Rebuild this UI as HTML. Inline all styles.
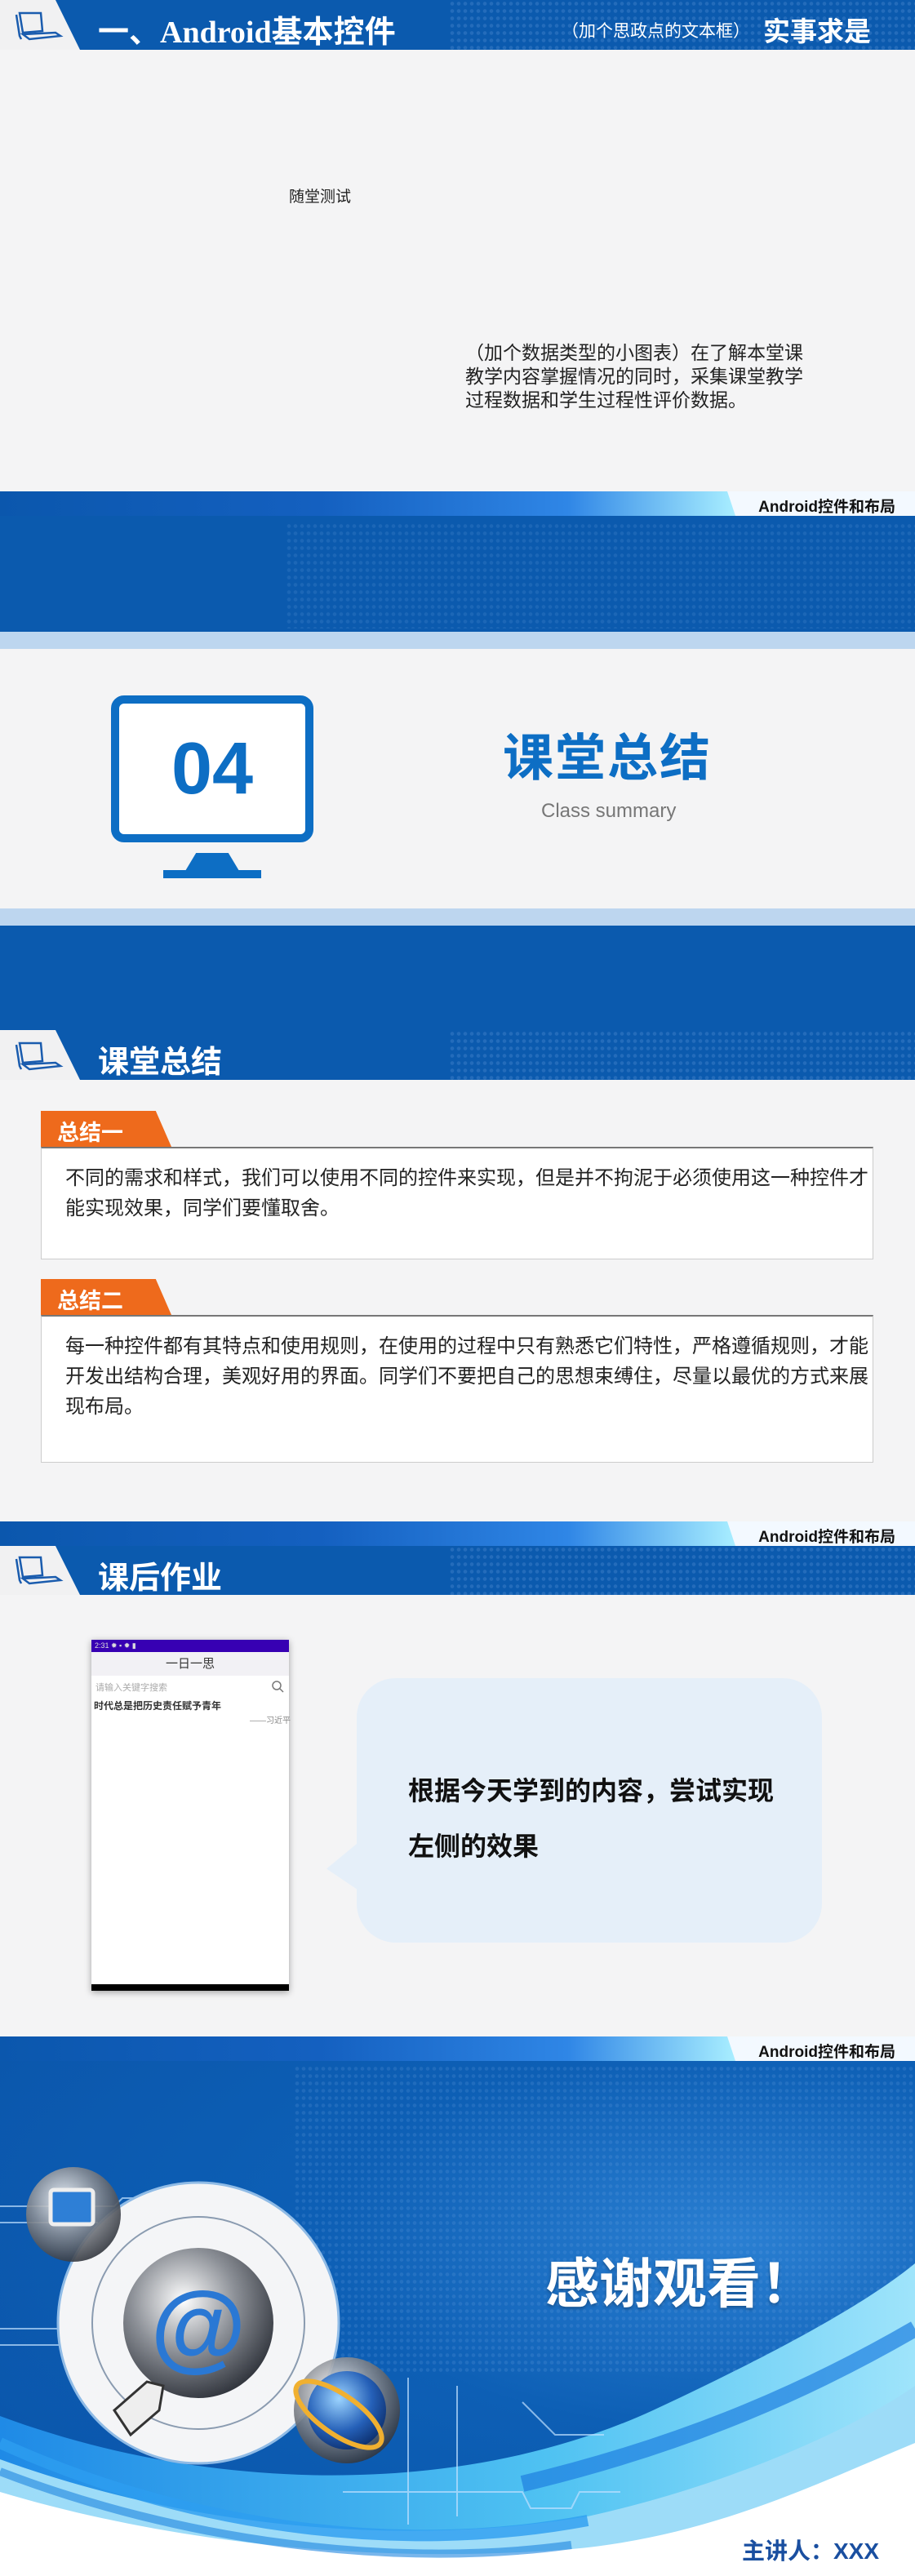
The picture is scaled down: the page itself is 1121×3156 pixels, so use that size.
<!DOCTYPE html>
<html><head><meta charset="utf-8">
<style>
*{margin:0;padding:0;box-sizing:border-box}
body{width:1121px;height:3156px;position:relative;background:#f4f4f5;overflow:hidden;font-family:"Liberation Sans","Noto Sans CJK SC",sans-serif}
.a{position:absolute}
.blue{background:#0b5aae}
.stripe{position:absolute;left:0;width:1121px;height:30px;background:linear-gradient(90deg,#0b57ad 0%,#1460c0 35%,#2f86e6 62%,#a6ecff 80%,#e9f7ff 84%)}
.stripe .lt{position:absolute;right:0;top:0;height:30px;width:250px;background:#f3f9ff;clip-path:polygon(8% 0,100% 0,100% 100%,12% 100%)}
.stripe span{position:absolute;right:24px;top:4px;font-size:19px;font-weight:bold;color:#111}
.tab{position:absolute;left:0;width:100px;height:61px;background:#f1f1f2;clip-path:polygon(0 0,68% 0,98% 100%,0 100%)}
.dots{background-image:radial-gradient(circle,rgba(120,170,230,.45) 2px,transparent 2.6px);background-size:8px 9px}
.h1w{color:#fff;font-weight:bold}
</style></head><body>

<!-- Slide 1 -->
<div class="a blue" style="left:0;top:0;width:1121px;height:61px"></div>
<div class="a dots" style="left:550px;top:0;width:571px;height:61px;opacity:.5"></div>
<div class="tab" style="top:0"></div>
<svg class="a" style="left:16px;top:12px" width="62" height="42" viewBox="0 0 62 42"><g fill="none" stroke="#1a5cae" stroke-width="2.5"><path d="M8 4 L34 4 L36 26 L12 28 Z"/><path d="M4 6 L8 32 L10 36"/><path d="M12 30 L52 28 L58 32 L20 36 Z"/></g></svg>
<div class="a h1w" style="left:120px;top:8px;font-size:38px;font-family:'Liberation Serif','Noto Sans CJK SC',serif">一、Android基本控件</div>
<div class="a" style="left:688px;top:22px;font-size:21px;color:#fff">（加个思政点的文本框）</div>
<div class="a h1w" style="left:935px;top:12px;font-size:33px">实事求是</div>
<div class="a" style="left:354px;top:226px;font-size:19px;color:#222">随堂测试</div>
<div class="a" style="left:570px;top:418px;width:425px;font-size:23px;line-height:29px;color:#222">（加个数据类型的小图表）在了解本堂课教学内容掌握情况的同时，采集课堂教学过程数据和学生过程性评价数据。</div>
<div class="stripe" style="top:602px"><div class="lt"></div><span>Android控件和布局</span></div>
<div class="a blue" style="left:0;top:632px;width:1121px;height:142px"></div>
<div class="a dots" style="left:350px;top:640px;width:771px;height:130px;opacity:.35"></div>
<div class="a" style="left:0;top:774px;width:1121px;height:21px;background:#bdd6ef"></div>

<!-- Slide 2 -->
<div class="a" style="left:136px;top:852px;width:248px;height:180px;border:10px solid #0d6ec4;border-radius:16px;background:#fff"></div>
<div class="a" style="left:136px;top:852px;width:248px;height:180px;text-align:center;line-height:180px;font-size:90px;font-weight:bold;color:#0d6ec4">04</div>
<div class="a" style="left:227px;top:1045px;width:66px;height:22px;background:#0d6ec4;clip-path:polygon(20% 0,80% 0,100% 100%,0 100%)"></div>
<div class="a" style="left:200px;top:1066px;width:120px;height:10px;background:#0d6ec4"></div>
<div class="a" style="left:616px;top:878px;font-size:62px;font-weight:bold;color:#0d6ec4;letter-spacing:2px">课堂总结</div>
<div class="a" style="left:663px;top:980px;font-size:24px;color:#777">Class summary</div>
<div class="a" style="left:0;top:1113px;width:1121px;height:21px;background:#bdd6ef"></div>

<!-- Slide 3 -->
<div class="a blue" style="left:0;top:1134px;width:1121px;height:189px"></div>
<div class="a dots" style="left:550px;top:1262px;width:571px;height:61px;opacity:.5"></div>
<div class="tab" style="top:1262px"></div>
<svg class="a" style="left:16px;top:1274px" width="62" height="42" viewBox="0 0 62 42"><g fill="none" stroke="#1a5cae" stroke-width="2.5"><path d="M8 4 L34 4 L36 26 L12 28 Z"/><path d="M4 6 L8 32 L10 36"/><path d="M12 30 L52 28 L58 32 L20 36 Z"/></g></svg>
<div class="a h1w" style="left:120px;top:1270px;font-size:38px">课堂总结</div>

<div class="a" style="left:50px;top:1361px;width:160px;height:44px;background:#ee6a1c;clip-path:polygon(0 0,88% 0,100% 100%,0 100%)"></div>
<div class="a h1w" style="left:70px;top:1366px;font-size:27px">总结一</div>
<div class="a" style="left:50px;top:1405px;width:1020px;height:138px;background:#fff;border:1px solid #ccc;border-top:2px solid #777"></div>
<div class="a" style="left:80px;top:1425px;width:985px;font-size:24px;line-height:37px;color:#222">不同的需求和样式，我们可以使用不同的控件来实现，但是并不拘泥于必须使用这一种控件才能实现效果，同学们要懂取舍。</div>

<div class="a" style="left:50px;top:1567px;width:160px;height:44px;background:#ee6a1c;clip-path:polygon(0 0,88% 0,100% 100%,0 100%)"></div>
<div class="a h1w" style="left:70px;top:1572px;font-size:27px">总结二</div>
<div class="a" style="left:50px;top:1611px;width:1020px;height:181px;background:#fff;border:1px solid #ccc;border-top:2px solid #777"></div>
<div class="a" style="left:80px;top:1631px;width:985px;font-size:24px;line-height:37px;color:#222">每一种控件都有其特点和使用规则，在使用的过程中只有熟悉它们特性，严格遵循规则，才能开发出结构合理，美观好用的界面。同学们不要把自己的思想束缚住，尽量以最优的方式来展现布局。</div>

<!-- Slide 4 -->
<div class="stripe" style="top:1864px"><div class="lt"></div><span>Android控件和布局</span></div>
<div class="a blue" style="left:0;top:1894px;width:1121px;height:60px"></div>
<div class="a dots" style="left:550px;top:1894px;width:571px;height:60px;opacity:.5"></div>
<div class="tab" style="top:1894px;height:60px"></div>
<svg class="a" style="left:16px;top:1904px" width="62" height="42" viewBox="0 0 62 42"><g fill="none" stroke="#1a5cae" stroke-width="2.5"><path d="M8 4 L34 4 L36 26 L12 28 Z"/><path d="M4 6 L8 32 L10 36"/><path d="M12 30 L52 28 L58 32 L20 36 Z"/></g></svg>
<div class="a h1w" style="left:120px;top:1902px;font-size:38px">课后作业</div>

<div class="a" style="left:112px;top:2009px;width:242px;height:430px;background:#fff;box-shadow:0 2px 8px rgba(0,0,0,.35)"></div>
<div class="a" style="left:112px;top:2009px;width:242px;height:15px;background:#3700b3;color:#ddd;font-size:9px;padding-left:4px;line-height:15px">2:31 ✹ ▪ ✹ ▮</div>
<div class="a" style="left:112px;top:2024px;width:242px;height:29px;background:#f2f1f5;text-align:center;line-height:29px;font-size:15px;color:#333">一日一思</div>
<div class="a" style="left:117px;top:2059px;font-size:11px;color:#aaa">请输入关键字搜索</div>
<svg class="a" style="left:332px;top:2058px" width="16" height="16"><circle cx="7" cy="7" r="5" fill="none" stroke="#777" stroke-width="1.5"/><path d="M11 11 L15 15" stroke="#777" stroke-width="1.5"/></svg>
<div class="a" style="left:115px;top:2081px;font-size:12px;font-weight:bold;color:#333">时代总是把历史责任赋予青年</div>
<div class="a" style="left:306px;top:2099px;font-size:10px;color:#888">——习近平</div>
<div class="a" style="left:112px;top:2431px;width:242px;height:8px;background:#000"></div>

<div class="a" style="left:437px;top:2056px;width:570px;height:324px;background:#e5eff9;border-radius:48px"></div>
<div class="a" style="left:400px;top:2240px;width:60px;height:90px;background:#e5eff9;clip-path:polygon(100% 0,0 55%,100% 100%)"></div>
<div class="a" style="left:500px;top:2160px;font-size:32px;font-weight:bold;color:#111;line-height:68px">根据今天学到的内容，尝试实现<br>左侧的效果</div>

<!-- Slide 5 -->
<div class="a" style="left:0;top:2523px;width:1121px;height:633px;background:radial-gradient(ellipse at 80% 35%,#2a7fd2 0%,#0d5fb5 40%,#0a53a8 100%)"></div>
<div class="a dots" style="left:360px;top:2530px;width:761px;height:380px;opacity:.4"></div>
<div class="stripe" style="top:2495px"><div class="lt"></div><span>Android控件和布局</span></div>
<svg class="a" style="left:0;top:2523px" width="1121" height="633" viewBox="0 0 1121 633">
<defs>
<linearGradient id="w1" x1="0" y1="0" x2="1" y2="0"><stop offset="0" stop-color="#1f8ae6"/><stop offset=".6" stop-color="#4fc2f2"/><stop offset="1" stop-color="#9fe4fb"/></linearGradient>
<radialGradient id="sp" cx=".4" cy=".35" r=".7"><stop offset="0" stop-color="#fff"/><stop offset=".5" stop-color="#8b8f96"/><stop offset="1" stop-color="#2c3038"/></radialGradient>
<radialGradient id="gl" cx=".4" cy=".35" r=".7"><stop offset="0" stop-color="#9cd4ff"/><stop offset=".6" stop-color="#2560b8"/><stop offset="1" stop-color="#0c2e6c"/></radialGradient>
</defs>
<path d="M0 437 C250 530 560 540 800 430 C950 360 1060 300 1121 250 L1121 633 L0 633 Z" fill="url(#w1)"/>
<path d="M0 490 C220 570 480 600 720 560 C900 520 1050 450 1121 400 L1121 633 L0 633 Z" fill="#9ddcf8"/>
<path d="M0 530 C200 590 450 620 700 600 C870 585 1000 520 1121 470 L1121 633 L0 633 Z" fill="#fff"/>
<path d="M0 470 C220 570 480 610 720 565" stroke="#2d9ef0" stroke-width="14" fill="none" opacity=".8"/>
<path d="M0 505 C220 590 480 625 700 595" stroke="#1e86e0" stroke-width="10" fill="none" opacity=".6"/>
<path d="M640 520 C850 470 1000 400 1121 330" stroke="#1e7fe0" stroke-width="20" fill="none" opacity=".7"/>
<g fill="none" stroke="#bfe0ff" stroke-width="2" opacity=".7">
<path d="M0 180 H140 L150 170 H200 L210 180 H310"/><path d="M0 200 H120"/><path d="M0 330 H120"/><path d="M0 350 H90 L100 360"/>
<path d="M420 530 H640 L650 550 H700 L710 530 H760"/><path d="M500 390 V570"/><path d="M560 400 V560"/><path d="M640 420 L680 460 H740"/>
</g>
<circle cx="243" cy="323" r="172" fill="#f4f5f7"/>
<circle cx="243" cy="323" r="172" fill="none" stroke="#8fbbe6" stroke-width="3"/>
<circle cx="243" cy="323" r="130" fill="none" stroke="#8a9bb0" stroke-width="2"/>
<circle cx="243" cy="323" r="92" fill="url(#sp)"/>
<text x="243" y="368" text-anchor="middle" font-size="120" font-weight="bold" fill="#2a78d4" font-family="Liberation Sans,sans-serif">@</text>
<circle cx="90" cy="190" r="58" fill="url(#sp)" opacity=".9"/>
<rect x="62" y="160" width="52" height="42" rx="4" fill="#2e7fd6" stroke="#eee" stroke-width="5"/>
<circle cx="425" cy="430" r="65" fill="url(#sp)" opacity=".9"/>
<circle cx="425" cy="430" r="48" fill="url(#gl)"/>
<ellipse cx="415" cy="435" rx="62" ry="24" transform="rotate(35 415 435)" fill="none" stroke="#f0b030" stroke-width="6"/>
<path d="M140 430 L180 395 L200 400 L195 430 L160 460 Z" fill="#eee" stroke="#333" stroke-width="3"/>
</svg>
<div class="a h1w" style="left:668px;top:2745px;font-size:66px;text-shadow:0 2px 4px rgba(0,0,0,.3)">感谢观看！</div>
<div class="a" style="left:909px;top:3104px;font-size:28px;font-weight:bold;color:#1a4fa0">主讲人：XXX</div>
</body></html>
